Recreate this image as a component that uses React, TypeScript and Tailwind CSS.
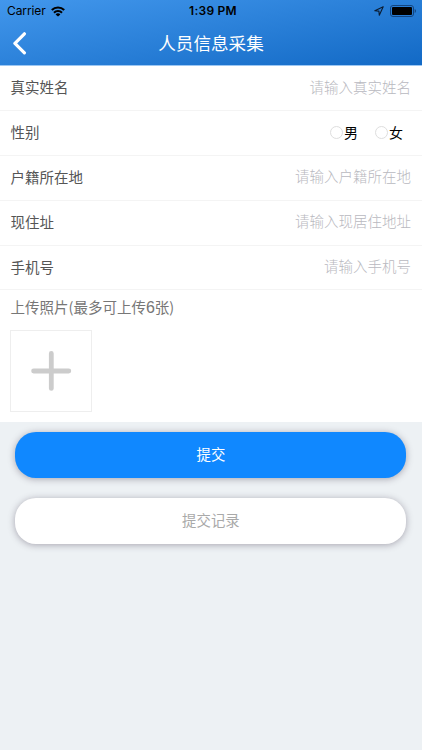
type Field = {
  label: string;
  placeholder?: string;
};

const fields: Field[] = [
  { label: "真实姓名", placeholder: "请输入真实姓名" },
  { label: "性别" },
  { label: "户籍所在地", placeholder: "请输入户籍所在地" },
  { label: "现住址", placeholder: "请输入现居住地址" },
  { label: "手机号", placeholder: "请输入手机号" },
];

const StatusBar = () => {
  return (
    <div className="grid grid-cols-3 items-center h-[22px] pl-[7px] pr-[5px] text-black font-['Inter','Liberation_Sans',sans-serif]">
      <div className="flex items-center gap-[5.5px]">
        <span className="text-[12px] leading-[22px] tracking-[-0.1px]">Carrier</span>
        <svg width="14" height="11" viewBox="0 0 14 11" fill="none" stroke="#000" strokeWidth="2.1">
          <path d="M0.8 4 A8.8 8.8 0 0 1 13.2 4" />
          <path d="M3 6.7 A5.7 5.7 0 0 1 11 6.7" />
          <path d="M7 10.6 L4.6 8.5 A3.1 3.1 0 0 1 9.4 8.5 Z" fill="#000" stroke="none" />
        </svg>
      </div>
      <span className="pl-[2px] text-center text-[12px] leading-[22px] font-semibold tracking-[0.25px]">1:39 PM</span>
      <div className="flex items-center justify-end gap-[6px] pr-px">
        <svg width="10" height="10" viewBox="0 0 10 10" fill="none" stroke="#0b1b30" strokeWidth="1.1" strokeLinejoin="round">
          <path d="M9.2 0.8 L0.8 4.7 L4.9 5.1 L5.3 9.2 Z" />
        </svg>
        <svg width="26" height="12" viewBox="0 0 26 12">
          <rect x="0.5" y="0.5" width="23" height="11" rx="2.5" fill="none" stroke="#13457f" />
          <rect x="2" y="2" width="20" height="8" rx="1" fill="#000" />
          <path d="M24.7 4 A2.2 2.2 0 0 1 24.7 8 Z" fill="#13457f" />
        </svg>
      </div>
    </div>
  );
};

const Header = () => {
  return (
    <header className="h-[66px] border-b border-[#9cc7f3] bg-[linear-gradient(170deg,#4297ec_0%,#1269c5_100%)] bg-origin-border">
      <StatusBar />
      <div className="grid grid-cols-[40px_1fr_40px] items-center h-[42px]">
        <svg className="ml-[12px]" width="16" height="24" viewBox="0 0 16 24" fill="none" stroke="#fff" strokeWidth="3.2" strokeLinecap="round" strokeLinejoin="round">
          <path d="M12.4 2.8 L2.9 12.4 L12.4 21.8" />
        </svg>
        <h1 className="text-center text-white text-[17.6px] leading-[42px] font-normal">人员信息采集</h1>
      </div>
    </header>
  );
};

const GenderOptions = () => {
  return (
    <div className="flex gap-[17px] mr-[8px] text-[14px] text-black">
      {["男", "女"].map((name) => (
        <label key={name} className="flex items-center gap-[1px]">
          <span className="w-[13px] h-[13px] rounded-full border border-[#dedede] bg-white"></span>
          {name}
        </label>
      ))}
    </div>
  );
};

const App = () => {
  return (
    <div className="w-full h-[750px] bg-[#edf1f4] overflow-hidden font-['Noto_Sans_CJK_SC',sans-serif]">
      <Header />

      {/* Form */}
      <div className="h-[356px] bg-white">
        {fields.map((field) => (
          <div
            key={field.label}
            className="flex items-center justify-between h-[44.9px] pl-[10.5px] pr-[11px] border-b border-[#f4f4f4]"
          >
            <span className="text-[14.5px] text-[#555555] -mt-[2px]">{field.label}</span>
            {field.placeholder ? (
              <span className="text-[14.5px] font-light text-[#b9b9c0] -mt-[3px]">{field.placeholder}</span>
            ) : (
              <GenderOptions />
            )}
          </div>
        ))}

        {/* Photos */}
        <p className="h-[39.5px] pl-[10.5px] text-[14.5px] leading-[33px] text-[#777777]">
          上传照片(最多可上传<span className="font-['Liberation_Sans',sans-serif] text-[16px]">6</span>张)
        </p>
        <div className="flex items-center justify-center w-[82px] h-[82px] ml-[10px] border border-[#eeeeee]">
          <svg width="42" height="42" viewBox="0 0 42 42" stroke="#cccccc" strokeWidth="4.8" strokeLinecap="round">
            <path d="M21.3 3.4 V38.4 M3.6 21 H38.8" />
          </svg>
        </div>
      </div>

      {/* Buttons */}
      <div className="flex flex-col gap-[20px] pt-[10px] pl-[15.4px] pr-[15.6px]">
        <button className="h-[46px] pb-[2px] rounded-[21px] bg-[#1088ff] text-white text-[14.4px] shadow-[0_1px_7px_rgba(70,60,80,0.42)]">
          提交
        </button>
        <button className="h-[46px] pb-[2px] rounded-[21px] bg-white text-[#a9a9a9] text-[14.4px] shadow-[0_1px_7px_rgba(70,60,80,0.42)]">
          提交记录
        </button>
      </div>
    </div>
  );
};

export default App;
